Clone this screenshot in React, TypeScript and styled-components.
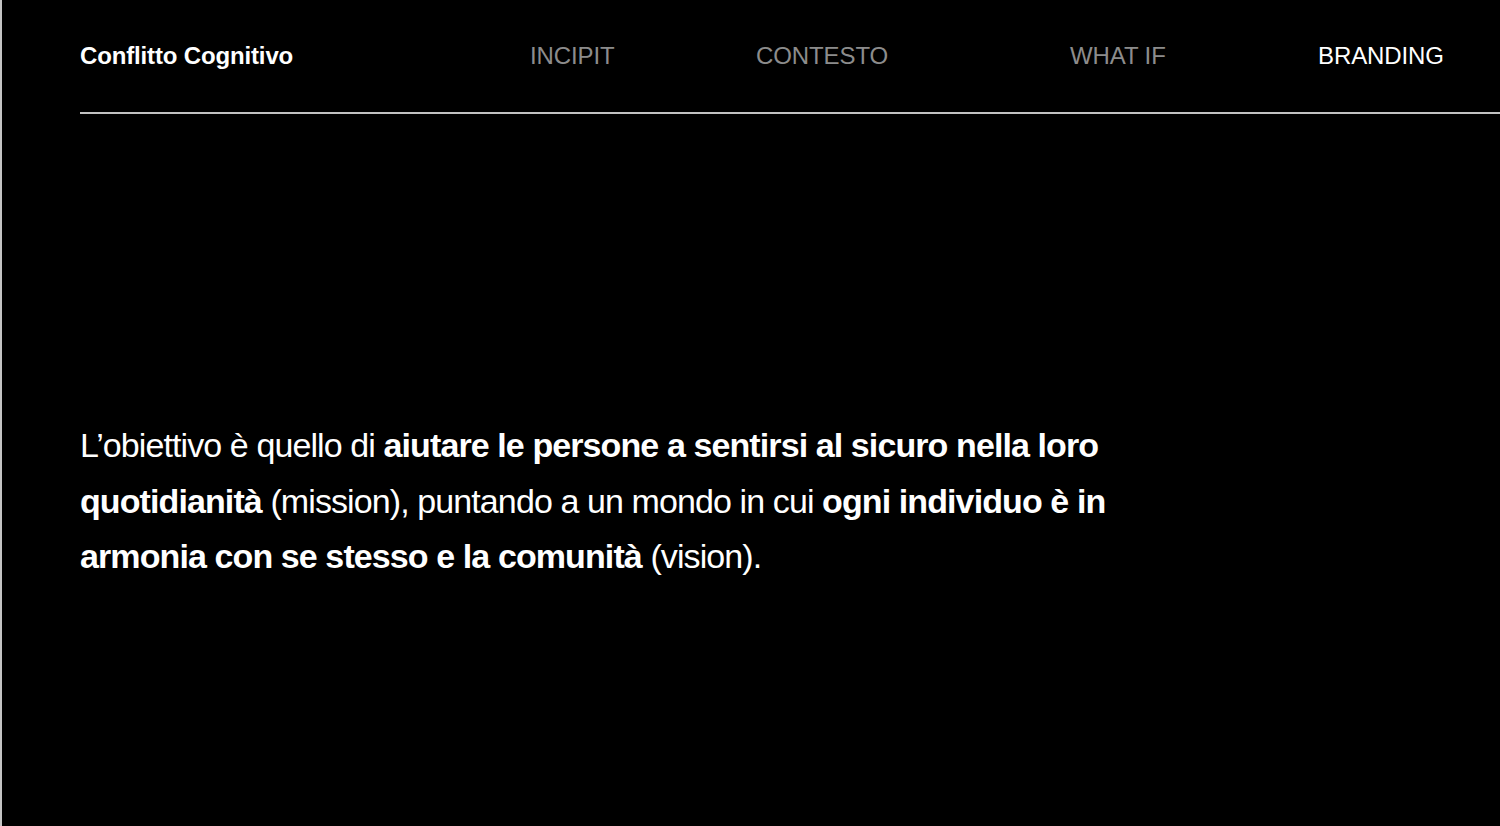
import React from 'react';
import styled, { createGlobalStyle } from 'styled-components';

const GlobalStyle = createGlobalStyle`
  html, body {
    margin: 0;
    padding: 0;
    background: #000;
  }
  body {
    font-family: "Liberation Sans", Arial, sans-serif;
    color: #fff;
  }
`;

const Page = styled.div`
  width: 1500px;
  height: 826px;
  box-sizing: border-box;
  border-left: 2px solid #c4c4c4;
  background: #000;
  overflow: hidden;
`;

const Header = styled.header`
  margin-left: 78px;
  height: 112px;
  border-bottom: 2px solid #c2c2c2;
  display: grid;
  grid-template-columns: 450px 226px 314px 248px auto;
  align-items: center;
`;

const Logo = styled.div`
  font-size: 24px;
  font-weight: 700;
  letter-spacing: -0.15px;
  color: #fff;
`;

const NavItem = styled.a<{ $active?: boolean }>`
  font-size: 24px;
  letter-spacing: -0.1px;
  color: ${(p) => (p.$active ? '#fff' : '#8c8c8c')};
  text-decoration: none;
`;

const Main = styled.main`
  padding: 304px 0 0 78px;
`;

const Statement = styled.p`
  margin: 0;
  width: 1080px;
  font-size: 34px;
  line-height: 55.5px;
  letter-spacing: -0.9px;
  font-weight: 400;
  color: #fff;

  strong {
    font-weight: 700;
  }
`;

export default () => {
  return (
    <Page>
      <GlobalStyle />
      <Header>
        <Logo>Conflitto Cognitivo</Logo>
        <NavItem>INCIPIT</NavItem>
        <NavItem>CONTESTO</NavItem>
        <NavItem>WHAT IF</NavItem>
        <NavItem $active>BRANDING</NavItem>
      </Header>
      <Main>
        <Statement>
          L’obiettivo è quello di <strong>aiutare le persone a sentirsi al sicuro nella loro quotidianità</strong>{' '}
          (mission), puntando a un mondo in cui <strong>ogni individuo è in armonia con se stesso e la comunità</strong>{' '}
          (vision).
        </Statement>
      </Main>
    </Page>
  );
};
